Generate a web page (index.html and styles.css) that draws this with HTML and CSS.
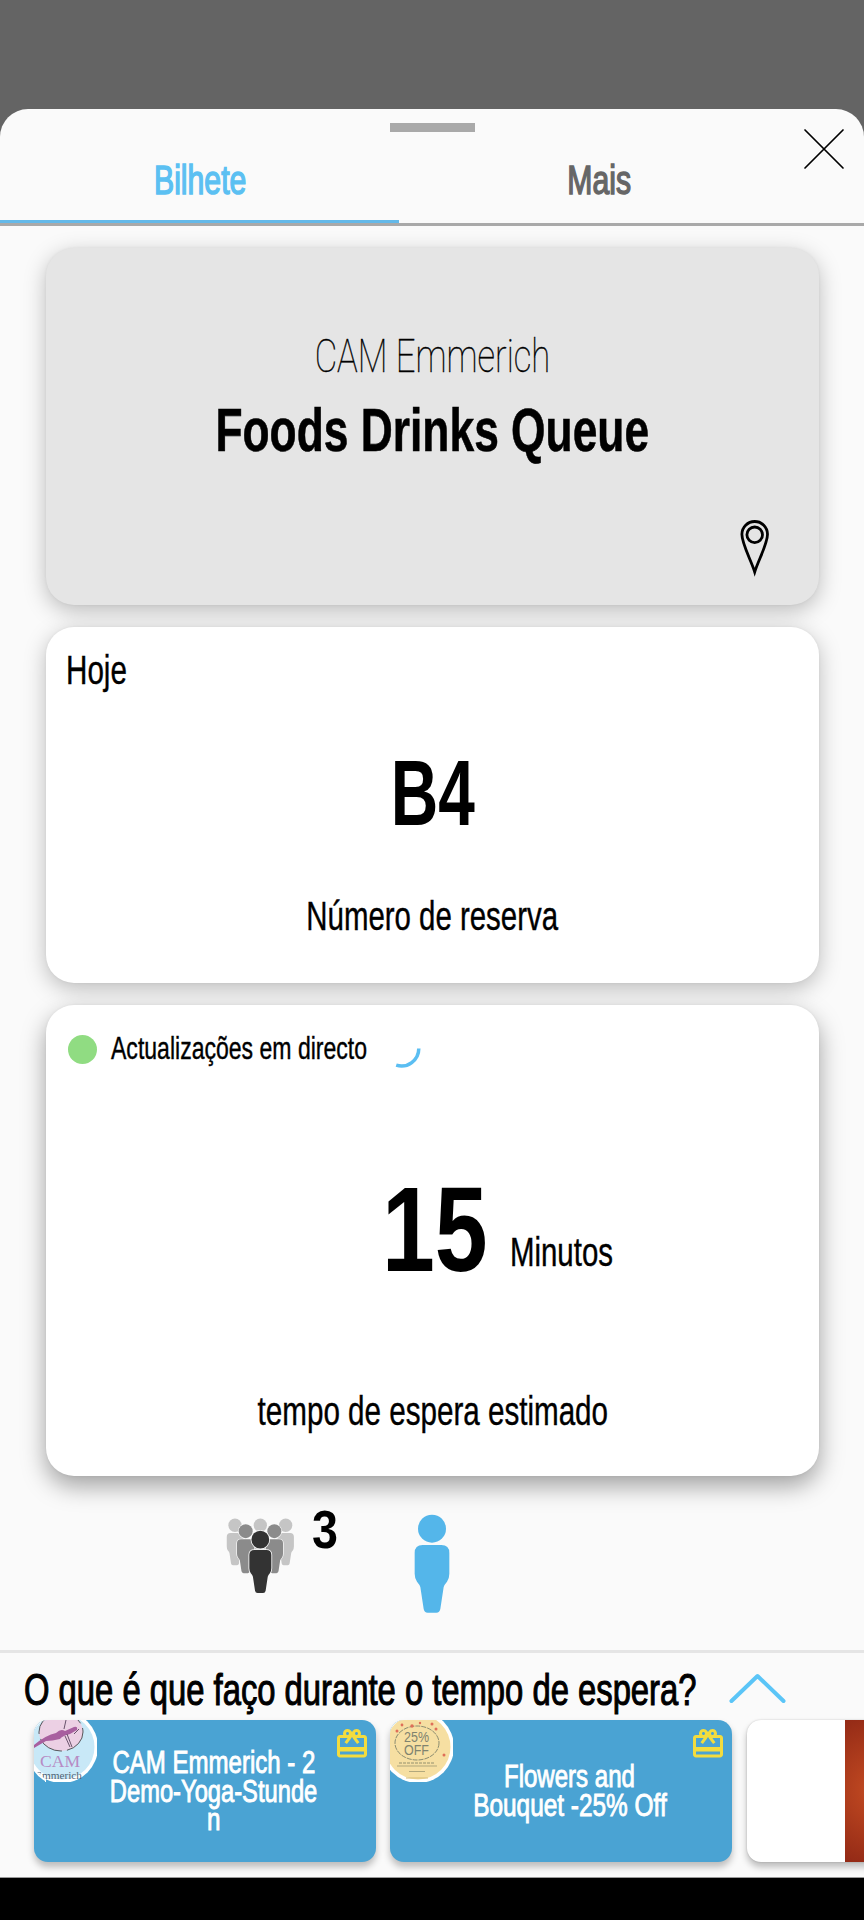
FILE: index.html
```html
<!DOCTYPE html>
<html lang="pt">
<head>
<meta charset="utf-8">
<title>Bilhete</title>
<link rel="stylesheet" href="styles.css">
</head>
<body>
<svg class="defs" width="0" height="0">
  <defs>
    <g id="person">
      <circle cx="0" cy="-49" r="42"/>
      <path d="M-28 0H28Q52 0 52 24V86Q52 100 45 110Q37 119 35 126L25 192Q23 203 13 203H-13Q-23 203-25 192L-35 126Q-37 119-45 110Q-52 100-52 86V24Q-52 0-28 0Z"/>
    </g>
    <path id="gift" d="M20 6h-2.18c.11-.31.18-.65.18-1 0-1.66-1.34-3-3-3-1.05 0-1.96.54-2.5 1.35l-.5.67-.5-.68C10.96 2.54 10.05 2 9 2 7.34 2 6 3.34 6 5c0 .35.07.69.18 1H4c-1.11 0-1.99.89-1.99 2L2 19c0 1.11.89 2 2 2h16c1.11 0 2-.89 2-2V8c0-1.11-.89-2-2-2zm-5-2c.55 0 1 .45 1 1s-.45 1-1 1-1-.45-1-1 .45-1 1-1zM9 4c.55 0 1 .45 1 1s-.45 1-1 1-1-.45-1-1 .45-1 1-1zm11 15H4v-2h16v2zm0-5H4V8h5.08L7 10.83 8.62 12 11 8.76l1-1.36 1 1.36L15.38 12 17 10.83 14.92 8H20v6z"/>
  </defs>
</svg>
<main class="sheet">
  <div class="handle"></div>
  <svg class="close" width="42" height="42" viewBox="0 0 42 42"><path d="M2 2L40 40M40 2L2 40"/></svg>
  <nav class="tabs">
    <div class="tab active"><span class="t">Bilhete</span></div>
    <div class="tab"><span class="t">Mais</span></div>
  </nav>

  <section class="cards">
    <article class="card place">
      <span class="t company">CAM Emmerich</span>
      <span class="t queue">Foods Drinks Queue</span>
      <svg class="pin" width="30" height="60" viewBox="0 0 30 60"><path d="M14.7 53C11 41 1.900 25 1.900 15.300a12.800 12.800 0 0 1 25.600 0C27.500 25 18.400 41 14.700 53Z"/><circle cx="14.7" cy="15.8" r="7.8"/></svg>
    </article>
    <article class="card ticket">
      <span class="t today">Hoje</span>
      <span class="t number">B4</span>
      <span class="t reserve">Número de reserva</span>
    </article>
    <article class="card wait">
      <div class="live">
        <i class="dot"></i>
        <span class="t live-label">Actualizações em directo</span>
        <svg class="spinner" width="40" height="40" viewBox="0 0 40 40"><path d="M37.8 19.5A17.4 17.4 0 0 1 15.2 36.2"/></svg>
      </div>
      <div class="time"><span class="t minutes">15</span><span class="t unit">Minutos</span></div>
      <span class="t estimate">tempo de espera estimado</span>
    </article>
  </section>

  <div class="people">
    <svg class="group" width="70" height="78" viewBox="0 0 210 234">
      <g fill="#c5c5c5"><use href="#person" transform="translate(27 48) scale(.475)"/><use href="#person" transform="translate(103 48) scale(.475)"/><use href="#person" transform="translate(179 48) scale(.475)"/></g>
      <g class="ring" fill="#8b8b8b"><use href="#person" transform="translate(59 67) scale(.5)"/><use href="#person" transform="translate(145 67) scale(.5)"/></g>
      <g class="ring" fill="#333"><use href="#person" transform="translate(103 99) scale(.635)"/></g>
    </svg>
    <span class="t ahead">3</span>
    <svg class="me" width="36" height="100" viewBox="-54 -93 108 300" fill="#54b6ea"><use href="#person"/></svg>
  </div>

  <section class="offers">
    <header class="question">
      <div class="question-slot"><span class="t ask">O que é que faço durante o tempo de espera?</span></div>
      <svg width="58" height="32" viewBox="0 0 58 32"><path d="M3.500 29L29.500 4L55.500 29"/></svg>
    </header>
    <div class="strip">
      <article class="offer">
        <svg class="avatar" width="63" height="62" viewBox="0 0 63 62">
          <circle cx="28" cy="27" r="36" fill="#fff"/><circle cx="28" cy="27" r="32.500" fill="#c8e8f7"/>
          <ellipse cx="27" cy="12" rx="22" ry="19" fill="#ecd0e4" stroke="#333" stroke-width=".8" stroke-dasharray="26 5"/>
          <path d="M0 25Q12 15 22 13Q27 8 31 11L40 7Q44 6 43 10L36 14Q28 16 26 19Q18 21 12 21L0 28Z" fill="#a85f9f"/>
          <path d="M32 0L30 9M33 14L38 27M31 16L36 27M40 14L45 9" fill="none" stroke="#59445c" stroke-width=".9"/>
          <text x="6" y="47" font-size="16" textLength="40" lengthAdjust="spacingAndGlyphs" fill="#b78bc4">CAM</text>
          <text x="1" y="58.500" font-size="9.500" textLength="47" lengthAdjust="spacingAndGlyphs" fill="#526474">Emmerich</text>
          <path d="M0 47Q4 55 12 59V62H0Z" fill="#fff"/>
          <path d="M0 51Q4 57 11 61V62H0Z" fill="#4aa3d3"/>
        </svg>
        <svg class="gift" width="36" height="36" viewBox="0 0 24 24"><use href="#gift"/></svg>
        <div class="offer-text"><span class="t l1">CAM Emmerich - 2</span><span class="t l2">Demo-Yoga-Stunde</span><span class="t l3">n</span></div>
      </article>
      <article class="offer">
        <svg class="avatar" width="63" height="62" viewBox="0 0 63 62">
          <circle cx="28" cy="27" r="36" fill="#fff"/><circle cx="28" cy="27" r="32.500" fill="#f6dfa2"/>
          <ellipse cx="27" cy="23" rx="22" ry="17" fill="none" stroke="#6f7663" stroke-width=".8" stroke-dasharray="5 1"/>
          <g class="off" fill="#7f836f"><text x="14" y="21.500" textLength="25" lengthAdjust="spacingAndGlyphs">25%</text><text x="14" y="35" textLength="25" lengthAdjust="spacingAndGlyphs">OFF</text></g>
          <g fill="#df6f58"><circle cx="7" cy="11" r="1.500"/><circle cx="12" cy="5" r="1.400"/><circle cx="22" cy="6" r="1.700"/><circle cx="30" cy="3" r="1.200"/><circle cx="42" cy="4" r="1.500"/><circle cx="46" cy="9" r="1.500"/><circle cx="54" cy="35" r="1.500"/></g>
          <g fill="none" stroke="#93906d" stroke-width="1"><path d="M9 43h35" stroke-dasharray="3 1"/><path d="M7 46h40" stroke-width=".7"/><path d="M19 51.500h16" stroke-width=".7"/><path d="M16 58h22" stroke="#d6bc75"/></g>
        </svg>
        <svg class="gift" width="36" height="36" viewBox="0 0 24 24"><use href="#gift"/></svg>
        <div class="offer-text two"><span class="t l4">Flowers and</span><span class="t l5">Bouquet -25% Off</span></div>
      </article>
      <article class="offer blank"><div class="photo"></div></article>
    </div>
  </section>
</main>
<footer class="navbar"></footer>
</body>
</html>
```
FILE: styles.css
```css
* { box-sizing: border-box; }
body {
  margin: 0;
  width: 864px;
  height: 1920px;
  overflow: hidden;
  padding-top: 109px;
  background: #646464;
  color: #000;
  font-family: "Liberation Sans", Arial, sans-serif;
}
.defs { position: absolute; }
svg { display: block; flex: none; }

/* Condensed text: glyphs are narrowed by the --sx factor */
.t {
  display: block;
  flex: none;
  width: max-content;
  white-space: nowrap;
  transform: scaleX(var(--sx));
}

.sheet {
  position: relative;
  display: flex;
  flex-direction: column;
  height: 1769px;
  padding-top: 14px;
  overflow: hidden;
  background: #fafafa;
  border-radius: 28px 28px 0 0;
  border-bottom: 1px solid #999;
}
.handle { width: 85px; height: 9px; margin-left: 390px; background: #a9a9a9; flex: none; }
.close { position: absolute; right: 19px; top: 19px; fill: none; stroke: #000; stroke-width: 1.7; stroke-linecap: round; }

.tabs { display: flex; flex: none; height: 94px; border-bottom: 3px solid #a9a9a9; }
.tab {
  display: flex;
  justify-content: center;
  width: 399px;
  padding: 24px 0 0 2px;
  font-size: 40px;
  line-height: 48px;
  color: #666;
  -webkit-text-stroke: 1.5px;
  --sx: .755;
}
.active { color: #5bc0f2; border-bottom: 3px solid #64b9e9; }

.cards { display: flex; flex: none; flex-direction: column; gap: 22px; padding: 22px 45px 0 46px; }
.card {
  position: relative;
  display: flex;
  flex-direction: column;
  align-items: center;
  border-radius: 28px;
  background: #fff;
  box-shadow: 0 6px 22px rgba(0, 0, 0, .25), 0 0 3px rgba(0, 0, 0, .06);
}
.place { height: 357px; background: #e5e5e5; padding-top: 80px; }
.company { font: 100 46px/56px Roboto, sans-serif; --sx: .753; -webkit-text-stroke: .4px; }
.queue { margin-top: 11px; font-weight: 700; font-size: 61px; line-height: 70px; --sx: .727; -webkit-text-stroke: .6px; }
.pin { position: absolute; right: 49px; bottom: 26px; fill: none; stroke: #000; stroke-width: 2.8; }

.ticket { height: 356px; padding-top: 19px; }
.today { align-self: flex-start; margin-left: 20px; font-size: 40px; line-height: 48px; --sx: .74; transform-origin: left; }
.number { margin-top: 44px; font-size: 92px; line-height: 110px; font-weight: 700; --sx: .715; }
.reserve { margin-top: 44px; font-size: 40px; line-height: 48px; --sx: .735; }

.wait { height: 471px; padding-top: 22px; box-shadow: 0 10px 24px rgba(0, 0, 0, .36), 0 0 3px rgba(0, 0, 0, .06); }
.live { display: flex; align-self: stretch; align-items: center; padding-left: 22px; height: 44px; }
.dot { width: 29px; height: 29px; border-radius: 50%; background: #90dc82; flex: none; }
.live-label { width: 270px; margin-left: 14px; font-size: 31px; line-height: 40px; --sx: .743; transform-origin: left; }
.spinner { fill: none; stroke: #5bbef2; stroke-width: 3.5; }
.time { display: flex; align-self: stretch; align-items: baseline; margin-top: 86px; padding-left: 336px; height: 144px; }
.minutes { width: 128px; font-size: 121px; line-height: 144px; font-weight: 700; --sx: .785; transform-origin: left; }
.unit { font-size: 40px; line-height: 48px; --sx: .735; transform-origin: left; position: relative; top: -5px; }
.estimate { margin-top: 86px; font-size: 40px; line-height: 48px; --sx: .74; }
.today, .reserve, .live-label, .unit, .estimate { -webkit-text-stroke: .4px; }

.people { display: flex; flex: none; height: 174px; padding: 41px 0 0 226px; }
.ahead { width: 102px; margin: -18px 0 0 16px; font-size: 53px; line-height: 62px; font-weight: 700; --sx: .88; transform-origin: left; }
.me { margin-top: -3px; }
.ring use { stroke: #fafafa; stroke-width: 8; paint-order: stroke; }

.offers { flex: none; border-top: 3px solid #e5e5e5; }
.question { display: flex; height: 67px; padding: 10px 0 0 24px; }
.question svg { margin-top: 9px; fill: none; stroke: #5bc5f7; stroke-width: 4; stroke-linecap: round; stroke-linejoin: round; }
.question-slot { width: 704px; flex: none; }
.ask { font-size: 44px; line-height: 54px; --sx: .745; transform-origin: left; -webkit-text-stroke: 1.1px; }

.strip { display: flex; gap: 14px; padding-left: 34px; }
.offer {
  position: relative;
  display: flex;
  justify-content: center;
  flex: none;
  width: 342px;
  height: 142px;
  border-radius: 14px;
  background: #4aa3d3;
  box-shadow: 0 5px 7px rgba(0, 0, 0, .25);
}
.avatar { position: absolute; left: 0; top: 0; border-radius: 14px 0 0 0; font-family: "Liberation Serif", serif; }
.off { font: 15px "Liberation Sans", sans-serif; }
.gift { position: absolute; right: 6px; top: 6px; fill: #f3dc3e; }
.offer-text {
  display: flex;
  flex-direction: column;
  align-items: center;
  padding: 29px 0 0 17px;
  font-size: 31px;
  line-height: 28.7px;
  color: #fff;
  -webkit-text-stroke: .9px;
}
.two { padding-top: 43px; }
.l1 { --sx: .775; } .l2 { --sx: .765; } .l3 { --sx: .78; } .l4 { --sx: .775; } .l5 { --sx: .787; }
.blank { margin-left: 1px; overflow: hidden; background: #fff; justify-content: flex-start; padding-left: 98px; box-shadow: 0 5px 7px rgba(0, 0, 0, .25), 0 0 2px rgba(0, 0, 0, .2); }
.photo { flex: none; width: 244px; height: 142px; background: radial-gradient(circle at 35px 70px, #c85428, #b8431f 22px, #8f2715 85px); }
.navbar { height: 42px; background: #000; }
```
